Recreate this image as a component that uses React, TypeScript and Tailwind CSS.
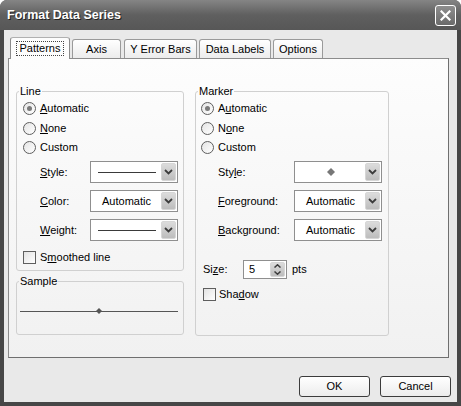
import React from "react";

function U({ children }: { children: React.ReactNode }) {
  return <span className="underline underline-offset-[1px]">{children}</span>;
}

function Radio({ checked, children }: { checked?: boolean; children: React.ReactNode }) {
  return (
    <div className="flex h-[19.5px] items-center gap-[4px]">
      <span className="flex h-[13px] w-[13px] items-center justify-center rounded-full border border-[#5e5e5e] bg-gradient-to-br from-[#e4e4e4] to-white">
        {checked && <span className="h-[5px] w-[5px] rounded-full bg-[#7a7a7a]" />}
      </span>
      <span>{children}</span>
    </div>
  );
}

function Check({ children, className = "" }: { children: React.ReactNode; className?: string }) {
  return (
    <div className={"flex h-[13px] items-center " + className}>
      <span className="h-[13px] w-[13px] border border-[#5e5e5e] bg-gradient-to-br from-[#e2e2e2] to-white" />
      <span>{children}</span>
    </div>
  );
}

function Chevron() {
  return (
    <svg width="9" height="6" viewBox="0 0 9 6">
      <polyline points="1,1 4.5,4.5 8,1" fill="none" stroke="#3c3c3c" strokeWidth="1.8" />
    </svg>
  );
}

function Select({ children }: { children: React.ReactNode }) {
  return (
    <div className="flex h-[22px] w-[88px] items-stretch border border-[#8f8f8f] bg-white p-px">
      <div className="flex flex-1 items-center justify-center">{children}</div>
      <div className="flex w-[15px] items-center justify-center rounded-[2px] border border-[#d6d6d6] bg-gradient-to-b from-[#dcdcdc] to-[#bdbdbd]">
        <Chevron />
      </div>
    </div>
  );
}

function LineGlyph() {
  return <span className="block h-px w-[58px] bg-[#3a3a3a]" />;
}

function Diamond({ size = 7, color = "#777" }: { size?: number; color?: string }) {
  return (
    <svg width={size} height={size} viewBox="0 0 8 8">
      <polygon points="4,0 8,4 4,8 0,4" fill={color} />
    </svg>
  );
}

function Field({ label, children, labelW }: { label: React.ReactNode; children: React.ReactNode; labelW: string }) {
  return (
    <div className="flex items-center">
      <span className={labelW}>{label}</span>
      {children}
    </div>
  );
}

function Tab({ children, w, selected, ml }: { children: React.ReactNode; w: string; selected?: boolean; ml: string }) {
  if (selected) {
    return (
      <div
        className={`relative z-10 -mb-px flex h-[22px] items-center justify-center rounded-t-[3px] border border-b-0 border-[#8c8c8c] border-t-[#b0b0b0] bg-[#fdfdfd] ${w} ${ml}`}
      >
        <span className="border border-dotted border-[#444] px-[3px] leading-[13px]">{children}</span>
      </div>
    );
  }
  return (
    <div
      className={`flex h-[19px] items-center justify-center rounded-t-[3px] border border-b-0 border-[#9a9a9a] bg-gradient-to-b from-white to-[#ececec] ${w} ${ml}`}
    >
      {children}
    </div>
  );
}

export default function App() {
  return (
    <div className="flex h-[406px] w-[461px] flex-col rounded-t-[7px] bg-[#474747] font-['Liberation_Sans',Arial,sans-serif] text-[11px] leading-[13px] text-black">
      <div className="flex h-[30px] shrink-0 items-center rounded-t-[7px] bg-gradient-to-b from-[#858585] via-[#5f5f5f] to-[#575757] pl-[7px] pr-[5px]">
        <span className="text-[12.5px] font-bold text-white [text-shadow:1px_1px_0_#222]">Format Data Series</span>
        <div className="ml-auto flex h-[21px] w-[21px] items-center justify-center rounded-[3px] border border-white bg-gradient-to-b from-[#8e8e8e] to-[#6a6a6a]">
          <svg width="11" height="11" viewBox="0 0 11 11">
            <path d="M1.5 1.5 L9.5 9.5 M9.5 1.5 L1.5 9.5" stroke="white" strokeWidth="2.2" strokeLinecap="square" />
          </svg>
        </div>
      </div>

      <div className="mx-[4px] mb-[4px] flex flex-1 flex-col bg-[#e9e9e9] pt-[7px]">
        <div className="ml-[6px] flex h-[21px] items-end">
          <Tab w="w-[60px]" ml="ml-0" selected>
            Patterns
          </Tab>
          <Tab w="w-[49px]" ml="ml-[2px]">Axis</Tab>
          <Tab w="w-[73px]" ml="ml-[3px]">Y Error Bars</Tab>
          <Tab w="w-[72px]" ml="ml-[2px]">Data Labels</Tab>
          <Tab w="w-[50px]" ml="ml-[2px]">Options</Tab>
        </div>

        <div className="ml-[4px] flex h-[300px] w-[441px] border border-[#8c8c8c] border-r-[#6f6f6f] border-b-[#6f6f6f] bg-gradient-to-b from-[#fdfdfd] to-[#f1f1f1] pl-[7px] pt-[26px]">
          <div className="flex w-[168px] flex-col">
            <fieldset className="h-[186px] rounded-[3px] border border-[#d0d0d0]">
              <legend className="ml-[2px] px-[1px]">Line</legend>
              <div className="flex flex-col pl-[6px] pt-[1px]">
                <Radio checked>
                  <U>A</U>utomatic
                </Radio>
                <Radio>
                  <U>N</U>one
                </Radio>
                <Radio>Custom</Radio>
                <div className="ml-[17px] mt-[3.5px] flex flex-col gap-[7px]">
                  <Field labelW="w-[50px]" label={<><U>S</U>tyle:</>}>
                    <Select>
                      <LineGlyph />
                    </Select>
                  </Field>
                  <Field labelW="w-[50px]" label={<><U>C</U>olor:</>}>
                    <Select>Automatic</Select>
                  </Field>
                  <Field labelW="w-[50px]" label={<><U>W</U>eight:</>}>
                    <Select>
                      <LineGlyph />
                    </Select>
                  </Field>
                </div>
                <Check className="mt-[10px] gap-[4px]">
                  S<U>m</U>oothed line
                </Check>
              </div>
            </fieldset>
            <fieldset className="mt-[4px] h-[60px] rounded-[3px] border border-[#d0d0d0]">
              <legend className="ml-[2px] px-[1px]">Sample</legend>
              <div className="ml-[3px] mt-[19px] flex h-[7px] w-[158px] items-center justify-center">
                <div className="relative flex w-full items-center justify-center">
                  <span className="absolute inset-x-0 top-1/2 h-px bg-[#555]" />
                  <span className="relative">
                    <Diamond size={6} color="#555" />
                  </span>
                </div>
              </div>
            </fieldset>
          </div>

          <fieldset className="ml-[11px] h-[251px] w-[194px] rounded-[3px] border border-[#d0d0d0]">
            <legend className="ml-[2px] px-[1px]">Marker</legend>
            <div className="flex flex-col pl-[5px] pt-[1px]">
              <Radio checked>
                A<U>u</U>tomatic
              </Radio>
              <Radio>
                N<U>o</U>ne
              </Radio>
              <Radio>Custom</Radio>
              <div className="ml-[17px] mt-[3.5px] flex flex-col gap-[7px]">
                <Field labelW="w-[76px]" label={<>Sty<U>l</U>e:</>}>
                  <Select>
                    <Diamond size={8} color="#777" />
                  </Select>
                </Field>
                <Field labelW="w-[76px]" label={<><U>F</U>oreground:</>}>
                  <Select>Automatic</Select>
                </Field>
                <Field labelW="w-[76px]" label={<><U>B</U>ackground:</>}>
                  <Select>Automatic</Select>
                </Field>
              </div>
              <div className="ml-[2px] mt-[19px] flex h-[19px] items-center">
                <span className="w-[40px]">
                  Si<U>z</U>e:
                </span>
                <div className="flex h-[19px] w-[44px] items-stretch border border-[#8f8f8f] bg-white p-px">
                  <span className="flex flex-1 items-center pl-[4px]">5</span>
                  <div className="flex w-[15px] flex-col rounded-[2px] border border-[#d6d6d6] bg-gradient-to-b from-[#dcdcdc] to-[#bdbdbd]">
                    <span className="flex flex-1 items-center justify-center">
                      <svg width="7" height="4" viewBox="0 0 7 4">
                        <polyline points="0.5,3.5 3.5,0.8 6.5,3.5" fill="none" stroke="#3c3c3c" strokeWidth="1.5" />
                      </svg>
                    </span>
                    <span className="flex flex-1 items-center justify-center">
                      <svg width="7" height="4" viewBox="0 0 7 4">
                        <polyline points="0.5,0.5 3.5,3.2 6.5,0.5" fill="none" stroke="#3c3c3c" strokeWidth="1.5" />
                      </svg>
                    </span>
                  </div>
                </div>
                <span className="ml-[5px]">pts</span>
              </div>
              <Check className="ml-[2px] mt-[9px] gap-[3px]">
                Sha<U>d</U>ow
              </Check>
            </div>
          </fieldset>
        </div>

        <div className="mt-[18px] flex justify-end gap-[10px] pr-[6px]">
          <button className="h-[21px] w-[71px] rounded-[3px] border border-[#3c3c3c] bg-gradient-to-b from-white to-[#ececec]">
            OK
          </button>
          <button className="h-[21px] w-[71px] rounded-[3px] border border-[#3c3c3c] bg-gradient-to-b from-white to-[#ececec]">
            Cancel
          </button>
        </div>
      </div>
    </div>
  );
}
